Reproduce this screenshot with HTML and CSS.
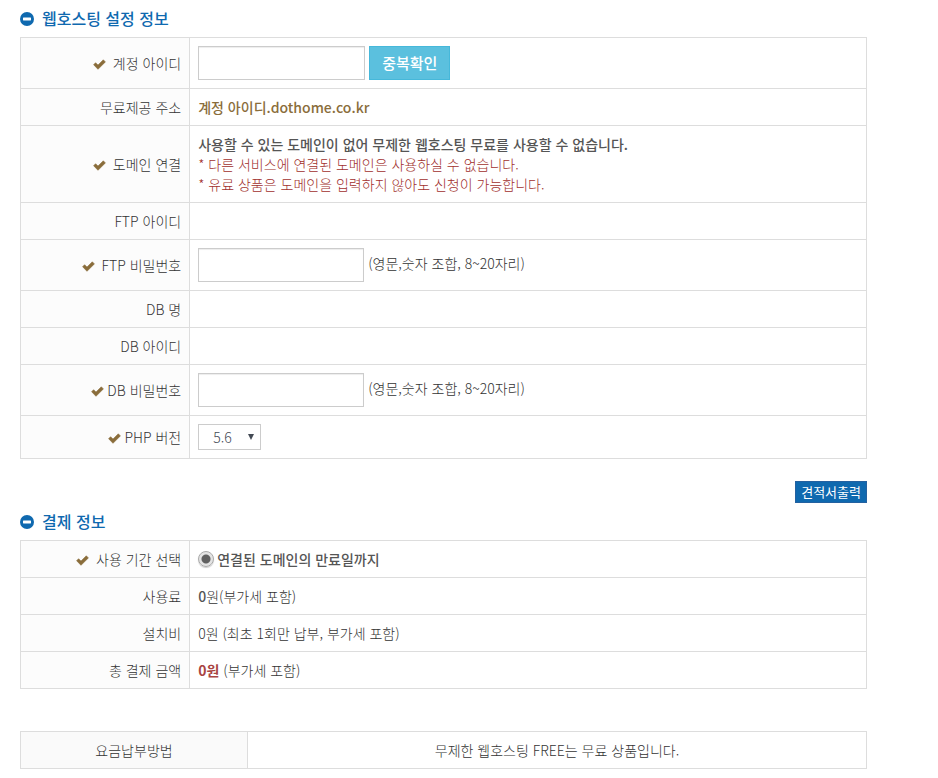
FILE: index.html
```html
<!DOCTYPE html>
<html lang="ko">
<head>
<meta charset="utf-8">
<meta name="viewport" content="width=device-width, initial-scale=1">
<title>웹호스팅 신청</title>
<link rel="stylesheet" href="styles.css">
</head>
<body>
<svg class="sprite" aria-hidden="true">
  <symbol id="check" viewBox="0 0 13 11"><path d="M0.6 5.7 2.6 3.7 5 6.1 10.3 0.8 12.4 2.9 5 10.3Z" stroke-width="0.6" stroke-linejoin="round" stroke="currentColor" fill="currentColor"/></symbol>
  <symbol id="minus" viewBox="0 0 14 14"><circle cx="7" cy="7" r="7" fill="currentColor"/><rect x="3" y="5.6" width="8" height="2.8" rx="0.4" fill="#fff"/></symbol>
</svg>
<main class="page">
  <section>
    <h2 class="title"><svg class="minus"><use href="#minus"/></svg>웹호스팅 설정 정보</h2>
    <table class="form">
      <tr>
        <th scope="row"><svg class="check wide"><use href="#check"/></svg><label for="account">계정 아이디</label></th>
        <td><div class="field"><input class="text account" id="account" type="text"><button class="confirm" type="button">중복확인</button></div></td>
      </tr>
      <tr>
        <th scope="row">무료제공 주소</th>
        <td><strong class="address">계정 아이디.dothome.co.kr</strong></td>
      </tr>
      <tr>
        <th scope="row"><svg class="check wide"><use href="#check"/></svg>도메인 연결</th>
        <td>
          <strong>사용할 수 있는 도메인이 없어 무제한 웹호스팅 무료를 사용할 수 없습니다.</strong>
          <p class="notice">* 다른 서비스에 연결된 도메인은 사용하실 수 없습니다.</p>
          <p class="notice">* 유료 상품은 도메인을 입력하지 않아도 신청이 가능합니다.</p>
        </td>
      </tr>
      <tr><th scope="row">FTP 아이디</th><td></td></tr>
      <tr>
        <th scope="row"><svg class="check wide"><use href="#check"/></svg><label for="ftp">FTP 비밀번호</label></th>
        <td><div class="field"><input class="text" id="ftp" type="password"><span class="hint">(영문,숫자 조합, 8~20자리)</span></div></td>
      </tr>
      <tr><th scope="row">DB 명</th><td></td></tr>
      <tr><th scope="row">DB 아이디</th><td></td></tr>
      <tr>
        <th scope="row"><svg class="check"><use href="#check"/></svg><label for="db">DB 비밀번호</label></th>
        <td><div class="field"><input class="text" id="db" type="password"><span class="hint">(영문,숫자 조합, 8~20자리)</span></div></td>
      </tr>
      <tr>
        <th scope="row"><svg class="check"><use href="#check"/></svg><label for="php">PHP 버전</label></th>
        <td><div class="select"><select id="php"><option>5.6</option></select><svg class="arrow" viewBox="0 0 6 6"><path d="M0 0H6L3 6Z" fill="#434a54"/></svg></div></td>
      </tr>
    </table>
  </section>
  <div class="actions"><button class="print" type="button">견적서출력</button></div>
  <section>
    <h2 class="title"><svg class="minus"><use href="#minus"/></svg>결제 정보</h2>
    <table class="form">
      <tr>
        <th scope="row"><svg class="check wide"><use href="#check"/></svg>사용 기간 선택</th>
        <td><div class="period"><input class="radio" id="period" name="period" type="radio" checked><label for="period">연결된 도메인의 만료일까지</label></div></td>
      </tr>
      <tr><th scope="row">사용료</th><td><strong>0</strong>원(부가세 포함)</td></tr>
      <tr><th scope="row">설치비</th><td>0원 (최초 1회만 납부, 부가세 포함)</td></tr>
      <tr><th scope="row">총 결제 금액</th><td><strong class="total">0원</strong> (부가세 포함)</td></tr>
    </table>
  </section>
  <table class="form payment">
    <tr><th scope="row">요금납부방법</th><td>무제한 웹호스팅 FREE는 무료 상품입니다.</td></tr>
  </table>
</main>
</body>
</html>
```
FILE: styles.css
```css
* { box-sizing: border-box; }

body {
  margin: 0;
  background: #fff;
  color: #333;
  font: 300 14px/20px "Noto Sans CJK KR", sans-serif;
}

.sprite { position: absolute; width: 0; height: 0; }

.page { padding: 8px 71px 8px 20px; }

.title {
  display: flex;
  align-items: center;
  gap: 8px;
  margin: 0 0 8px;
  color: #0f69af;
  font-size: 16px;
  font-weight: 500;
  line-height: 21px;
}

.minus { width: 14px; height: 14px; }

.form {
  width: 100%;
  border-collapse: collapse;
  table-layout: fixed;
}

.form th,
.form td {
  height: 37px;
  padding: 8px;
  border: 1px solid #ddd;
  vertical-align: middle;
}

.form th {
  width: 20%;
  background: #fcfcfc;
  font-weight: 300;
  text-align: right;
}

strong { color: #555; font-weight: 500; }
.address { color: #8a6d3b; }
.notice { margin: 0; color: #a12f2d; }
.total { color: #a94442; font-weight: 700; }

.check {
  width: 13px;
  height: 11px;
  margin-right: 3px;
  color: #8a6d3b;
  vertical-align: -1px;
}

.wide { margin-right: 7px; }

.field {
  display: flex;
  align-items: center;
  gap: 4px;
}

.hint { padding-bottom: 4px; }

.text {
  width: 166px;
  height: 34px;
  padding: 6px 8px;
  border: 1px solid #ccc;
  border-radius: 0;
  background: #fff;
  box-shadow: inset 0 1px 1px #00000013;
  font: inherit;
}

.account { width: 167px; }

.confirm {
  height: 34px;
  padding: 0 12px;
  border: 1px solid #46b8da;
  background: #5bc0de;
  color: #fff;
  font: 500 15px/20px "Noto Sans CJK KR", sans-serif;
}

.select {
  position: relative;
  width: 63px;
  height: 26px;
}

.select select {
  width: 100%;
  height: 100%;
  padding: 0 14px;
  border: 1px solid #ccc;
  border-radius: 0;
  appearance: none;
  background: #fff;
  color: #434a54;
  font: inherit;
}

.arrow {
  position: absolute;
  top: 10px;
  right: 7px;
  width: 6px;
  height: 6px;
  pointer-events: none;
}

.actions {
  display: flex;
  justify-content: flex-end;
  margin: 22px 0 8px;
}

.print {
  height: 22px;
  padding: 0 5px;
  border: 1px solid #2461a0;
  background: #0f69af;
  color: #fff;
  font: 400 13px/20px "Noto Sans CJK KR", sans-serif;
}

.period {
  display: flex;
  align-items: center;
  gap: 3px;
  color: #555;
  font-weight: 500;
}

.radio {
  width: 16px;
  height: 16px;
  margin: 0;
  border: 1px solid #aaa;
  border-radius: 50%;
  appearance: none;
  background: radial-gradient(circle, #606060 0 4px, #e3e3e3 5px);
  box-shadow: 0 1px 1px #0003;
}

.payment { margin-top: 42px; }
.payment th { width: 227px; background: #fafafa; }
.payment th,
.payment td { text-align: center; }
```
